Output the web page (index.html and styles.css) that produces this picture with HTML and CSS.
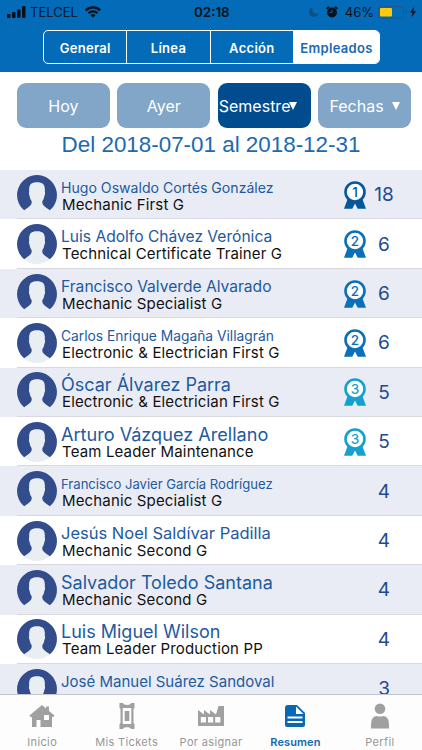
FILE: index.html
```html
<!DOCTYPE html>
<html lang="es">
<head>
  <meta charset="UTF-8" />
  <meta name="viewport" content="width=device-width, initial-scale=1" />
  <title>Resumen - Empleados</title>
  <link rel="stylesheet" href="styles.css">
</head>
<body>

  <svg class="defs" width="0" height="0">
    <symbol id="avatar" viewBox="0 0 40 40">
      <circle cx="20" cy="20" r="20" fill="#e9eef2"/>
      <path fill="#324c8c" d="M20 0a20 20 0 0 1 12.800 35.300c-2-1.900-5.200-3.400-6.800-5.600c-.9-1.300-.9-3-.3-4.200c1-1.200 1.500-2.900 1.700-4.700c.8-1 .8-3.400.4-4.400c.5-6.200-1.300-9.200-7.800-9.200s-8.300 3-7.800 9.200c-.4 1-.4 3.400.4 4.400c.2 1.800.7 3.500 1.700 4.700c.6 1.200.6 2.900-.3 4.200c-1.600 2.200-4.800 3.700-6.800 5.600A20 20 0 0 1 20 0z"/>
    </symbol>
    <symbol id="medal" viewBox="0 0 22 28">
      <path fill="currentColor" d="M4 17L0 27.800h8.300L11 22.500l2.700 5.300H22L18 17z"/>
      <circle cx="11" cy="11" r="9.500" fill="#fff" stroke="currentColor" stroke-width="2.600"/>
    </symbol>
  </svg>

  <header class="header">
    <div class="status">
      <svg class="signal" viewBox="0 0 19 12"><rect x="0" y="8" width="3.500" height="4" rx="1"/><rect x="5" y="6" width="3.500" height="6" rx="1"/><rect x="10" y="3.500" width="3.500" height="8.500" rx="1"/><rect x="15" y="0" width="3.500" height="12" rx="1"/></svg>
      <span class="carrier">TELCEL</span>
      <svg class="wifi" viewBox="0 0 16 12"><path fill="none" stroke="#06101a" stroke-width="2.200" d="M.8 4.400a10.300 10.300 0 0 1 14.400 0M3.400 7.300a6.600 6.600 0 0 1 9.200 0"/><path d="M5.500 9.200a3.700 3.700 0 0 1 5 0L8 11.800z"/></svg>
      <span class="clock">02:18</span>
      <div class="status-right">
        <svg class="moon" viewBox="0 0 10 10"><path fill="#124d83" d="M3.600 0a4.900 4.900 0 0 0 6.200 6.600A5 5 0 1 1 3.600 0z"/></svg>
        <svg class="alarm" viewBox="0 0 12 12"><circle cx="6" cy="6.500" r="4.900"/><path stroke="#06101a" stroke-width="2" stroke-linecap="round" d="M1.300 2.300l1.300-1M10.700 2.300l-1.300-1"/><path fill="none" stroke="#036bb7" stroke-width="1" d="M6 3.500v3H3.800"/></svg>
        <span class="percent">46%</span>
        <svg class="battery" viewBox="0 0 29 13"><rect x=".5" y=".5" width="25" height="11.500" rx="2.500" fill="none" stroke="#1c598c"/><rect x="2" y="2" width="12" height="8.500" rx="1" fill="#fecb0a"/><path fill="#1c598c" d="M27 4.200q1.600.4 1.600 2T27 8.300z"/></svg>
        <svg class="bolt" viewBox="0 0 6 10"><path d="M4 0L0 5.600h2.400L1.800 10 6 4.200H3.400z"/></svg>
      </div>
    </div>
    <nav class="segments">
      <span class="segment">General</span>
      <span class="segment">Línea</span>
      <span class="segment">Acción</span>
      <span class="segment active">Empleados</span>
    </nav>
  </header>

  <div class="filters">
    <button class="filter">Hoy</button>
    <button class="filter">Ayer</button>
    <button class="filter selected">Semestre<i class="arrow"></i></button>
    <button class="filter dates">Fechas<i class="arrow"></i></button>
  </div>
  <h2 class="range">Del 2018-07-01 al 2018-12-31</h2>

  <main class="list" id="list"></main>

  <footer class="tabs">
    <div class="tab">
      <svg viewBox="0 0 26 26"><path fill-rule="evenodd" d="M13 2L.5 12.500l1 1.500H3v10h4.500v-7h4v7H23V14h1.500l1-1.500L20 8V3.500h-3v2zM15 12h5v5h-5z"/></svg>
      <span>Inicio</span>
    </div>
    <div class="tab">
      <svg viewBox="0 0 26 26"><path fill-rule="evenodd" d="M5.500 0h3.500c0 2.500 8 2.500 8 0h3.500v5l-1 1v14l1 1v5H17c0-2.500-8-2.500-8 0H5.500v-5l1-1V6l-1-1zM8.700 5v16h8.600V5zM10.700 8h4.600v10h-4.600z"/></svg>
      <span>Mis Tickets</span>
    </div>
    <div class="tab">
      <svg viewBox="0 0 26 26"><path fill-rule="evenodd" d="M0 23V7l6 4.500V7l6 4.500V7l6 4.500L20.500 3H26v20zM2.800 14v5.500h5.200V14zM10 14v5.500h5.200V14zM17.200 14v5.500h5.200V14z"/></svg>
      <span>Por asignar</span>
    </div>
    <div class="tab current">
      <svg viewBox="0 0 26 26"><path fill-rule="evenodd" d="M6 2h9l8 8v12q0 2-2 2H5q-2 0-2-2V5q0-3 3-3zM14 3.500V11h7.500zM5.500 13.500v2h15v-2zM5.500 18v2h15v-2z"/></svg>
      <span>Resumen</span>
    </div>
    <div class="tab">
      <svg viewBox="0 0 26 26"><circle cx="13" cy="5.700" r="5.300"/><path d="M4 25.500v-3.500q0-9 6-9 3 1.200 6 0 6 0 6 9v3.500z"/></svg>
      <span>Perfil</span>
    </div>
  </footer>

  <script src="script.js"></script>
</body>
</html>
```

FILE: styles.css
```css
* {
  box-sizing: border-box;
}

body {
  margin: 0;
  height: 750px;
  display: flex;
  flex-direction: column;
  overflow: hidden;
  background: #fff;
  font-family: Inter, Roboto, sans-serif;
}

.defs {
  position: absolute;
}

/* HEADER */
.header {
  height: 72px;
  flex: none;
  background: #036bb7;
}

.status {
  position: relative;
  height: 30px;
  padding: 0 6px 6px 7px;
  display: flex;
  align-items: center;
  color: #06101a;
  font-size: 13px;
}

.status svg {
  fill: #06101a;
}

.signal {
  width: 19px;
  height: 12px;
}

.carrier {
  margin: 0 7px 0 4px;
  width: 48px;
  white-space: nowrap;
  opacity: .85;
}

.wifi {
  width: 16px;
  height: 12px;
}

.clock {
  position: absolute;
  left: 194px;
  top: 4px;
  font-size: 13.400px;
  font-weight: 600;
}

.status-right {
  margin-left: auto;
  display: flex;
  align-items: center;
}

.moon {
  width: 10px;
  height: 10px;
}

.alarm {
  width: 12px;
  height: 12px;
  margin: 0 7px 0 7px;
}

.battery {
  width: 29px;
  height: 13px;
  margin: 0 3px 0 4px;
}

.bolt {
  width: 6px;
  height: 10px;
}

.segments {
  display: flex;
  width: 337px;
  height: 34px;
  margin-left: 43px;
  border: 1px solid #fff;
  border-radius: 5px;
  overflow: hidden;
}

.segment {
  flex: 1;
  border-right: 1px solid #fff;
  line-height: 34px;
  text-align: center;
  color: #fff;
  font-size: 13px;
  font-weight: 600;
  letter-spacing: .3px;
}

.segment.active {
  flex: none;
  width: 85px;
  border: 0;
  background: #fff;
  color: #1769b4;
}

/* FILTERS */
.filters {
  display: flex;
  gap: 7.500px;
  flex: none;
  padding: 11px 11px 0 17px;
}

.filter {
  display: flex;
  align-items: center;
  justify-content: center;
  width: 93px;
  height: 45px;
  padding: 0;
  border: 0;
  border-radius: 9px;
  background: #81a6c8;
  color: #fff;
  font-family: inherit;
  font-size: 16px;
}

.filter.selected {
  justify-content: flex-start;
  padding-left: 1px;
  background: #004c8e;
}

.arrow {
  border: 4.500px solid transparent;
  border-top: 8px solid #fff;
  border-bottom: 0;
}

.selected .arrow {
  margin-left: -1px;
}

.dates .arrow {
  margin-left: 8px;
}

.range {
  margin: 0;
  height: 42px;
  flex: none;
  line-height: 33px;
  text-align: center;
  color: #1b69b0;
  font-family: "Liberation Sans", sans-serif;
  font-size: 22.400px;
  font-weight: normal;
}

/* LIST */
.list {
  flex: 1;
  min-height: 0;
  overflow: hidden;
}

.row {
  display: flex;
  align-items: center;
  height: 49.420px;
  padding-left: 17px;
  background: linear-gradient(#d7d9df, #d7d9df) 17px 100% / 100% 1px no-repeat #fff;
}

.row:nth-child(odd) {
  background-color: #e9ecf5;
}

.avatar {
  width: 40px;
  height: 40px;
  margin-right: 4px;
}

.person {
  width: 283px;
  padding-top: 2px;
  white-space: nowrap;
}

.name {
  height: 17px;
  line-height: 17px;
  color: #225a9e;
}

.name.small {
  line-height: 19px;
}

.role {
  height: 17px;
  padding-left: 1px;
  line-height: 17px;
  color: #111;
  font-size: 15px;
  letter-spacing: .15px;
}

.medal {
  width: 22px;
  height: 28px;
}

.badge {
  position: relative;
  width: 22px;
  height: 28px;
}

.badge b {
  position: absolute;
  left: 0;
  top: 0;
  width: 22px;
  line-height: 22px;
  text-align: center;
  font-size: 13.500px;
  font-weight: 500;
}

.rank1 { color: #05569a; }
.rank2 { color: #0b70b7; }
.rank3 { color: #16a0d0; }

.total {
  width: 36px;
  text-align: center;
  color: #214b90;
  font-size: 19px;
}

/* TABS */
.tabs {
  display: flex;
  flex: none;
  height: 56px;
  border-top: 1px solid #c4c6ca;
  background: #fdfdfd;
}

.tab {
  flex: 1;
  display: flex;
  flex-direction: column;
  align-items: center;
  padding-top: 8px;
  color: #979797;
  font-size: 11px;
  letter-spacing: .35px;
}

.tab svg {
  width: 26px;
  height: 26px;
  fill: #a0a0a0;
}

.tab span {
  margin-top: 6px;
  line-height: 14px;
  white-space: nowrap;
}

.tab.current {
  color: #1268b3;
  font-weight: 600;
  letter-spacing: .1px;
}

.tab.current svg {
  fill: #0768b5;
}
```

FILE: script.js
```javascript
// name, role, total, rank, name size
const employees = [
  ["Hugo Oswaldo Cortés González", "Mechanic First G", 18, 1, 14.1],
  ["Luis Adolfo Chávez Verónica", "Technical Certificate Trainer G", 6, 2, 15.6],
  ["Francisco Valverde Alvarado", "Mechanic Specialist G", 6, 2, 15.6],
  ["Carlos Enrique Magaña Villagrán", "Electronic & Electrician First G", 6, 2, 13.8],
  ["Óscar Álvarez Parra", "Electronic & Electrician First G", 5, 3, 18],
  ["Arturo Vázquez Arellano", "Team Leader Maintenance", 5, 3, 18.1],
  ["Francisco Javier García Rodríguez", "Mechanic Specialist G", 4, 0, 13.1],
  ["Jesús Noel Saldívar Padilla", "Mechanic Second G", 4, 0, 16.5],
  ["Salvador Toledo Santana", "Mechanic Second G", 4, 0, 18],
  ["Luis Miguel Wilson", "Team Leader Production PP", 4, 0, 18],
  ["José Manuel Suárez Sandoval", "", 3, 0, 15]
];

document.getElementById("list").innerHTML = employees.map(([name, role, total, rank, size]) => `
  <div class="row">
    <svg class="avatar"><use href="#avatar"/></svg>
    <div class="person">
      <div class="name${size < 14 ? " small" : ""}" style="font-size: ${size}px">${name}</div>
      <div class="role">${role.replace("&", "&amp;")}</div>
    </div>
    <div class="badge rank${rank}">${rank ? `<svg class="medal"><use href="#medal"/></svg><b>${rank}</b>` : ""}</div>
    <div class="total">${total}</div>
  </div>`).join("");
```
